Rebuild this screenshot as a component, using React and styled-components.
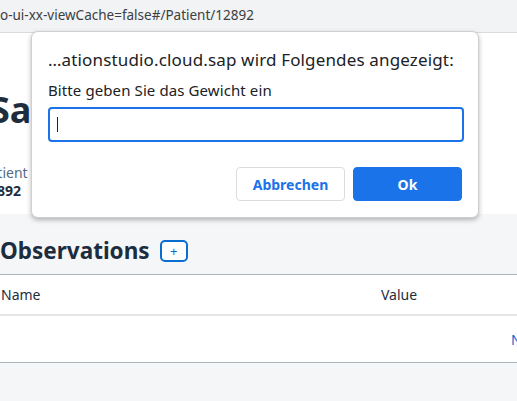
import React from "react";
import styled, { createGlobalStyle } from "styled-components";

const Global = createGlobalStyle`
  html, body {
    margin: 0;
    padding: 0;
    background: #f5f6f7;
    overflow: hidden;
  }
  * { box-sizing: border-box; }
`;

const Screen = styled.div`
  position: relative;
  width: 517px;
  height: 401px;
  overflow: hidden;
  display: flex;
  flex-direction: column;
  font-family: "Noto Sans", "Open Sans", sans-serif;
`;

const UrlBar = styled.div`
  height: 33px;
  flex: none;
  background: #f1f3f4;
  border-bottom: 1px solid #dadce0;
  padding: 4px 0 0 0;
  font-size: 13.5px;
  line-height: 22px;
  color: #3c4043;
  white-space: nowrap;
`;

const Header = styled.header`
  height: 181px;
  flex: none;
  background: #ffffff;
  padding-top: 55px;
  overflow: hidden;
`;

const Title = styled.h1`
  margin: 0 0 0 -10px;
  font-size: 36px;
  line-height: 44px;
  font-weight: 700;
  color: #1d2d3e;
  white-space: nowrap;
`;

const Meta = styled.div`
  margin: 32px 0 0 -19px;
  display: flex;
  flex-direction: column;
`;

const MetaLabel = styled.span`
  font-size: 14px;
  line-height: 18px;
  color: #556b82;
`;

const MetaValue = styled.span`
  font-size: 14px;
  line-height: 18px;
  font-weight: 700;
  color: #1d2d3e;
`;

const Content = styled.main`
  flex: 1;
  background: #f5f6f7;
  padding-top: 19px;
`;

const SectionHead = styled.div`
  display: flex;
  align-items: center;
  gap: 10px;
  height: 36px;
`;

const SectionTitle = styled.h2`
  margin: 0;
  font-size: 22.5px;
  font-weight: 700;
  color: #1d2d3e;
  line-height: 30px;
`;

const AddButton = styled.button`
  width: 28px;
  height: 22px;
  padding: 0;
  border: 2px solid #0a6ed1;
  border-radius: 5px;
  background: #ffffff;
  color: #0a6ed1;
  font-size: 13px;
  line-height: 16px;
  font-family: inherit;
  display: flex;
  align-items: center;
  justify-content: center;
`;

const Table = styled.div`
  margin-top: 5px;
  background: #ffffff;
  border-top: 1px solid #a9b4be;
  border-bottom: 1px solid #a9b4be;
`;

const Row = styled.div`
  display: grid;
  grid-template-columns: 380px 1fr;
  align-items: center;
  height: ${(p) => p.$h}px;
  border-bottom: ${(p) => (p.$sep ? "2px solid #e5e5e5" : "none")};
  font-size: 14px;
  color: ${(p) => p.$color || "#1d2d3e"};
`;

const Cell = styled.div`
  padding-left: ${(p) => p.$pad || 1}px;
  white-space: nowrap;
  overflow: hidden;
`;

const Dialog = styled.div`
  position: absolute;
  left: 31px;
  top: 31px;
  width: 448px;
  height: 187px;
  background: #ffffff;
  border: 1px solid #cfcfcf;
  border-radius: 7px;
  box-shadow: 0 2px 5px rgba(0, 0, 0, 0.28);
  padding: 16px 16px 0 16px;
  font-family: "Noto Sans", "Open Sans", sans-serif;
  color: #202124;
`;

const DialogTitle = styled.div`
  font-size: 17px;
  letter-spacing: 0.15px;
  line-height: 24px;
  white-space: nowrap;
`;

const DialogText = styled.div`
  margin-top: 7px;
  font-size: 15px;
  letter-spacing: 0.1px;
  line-height: 22px;
`;

const Field = styled.div`
  margin-top: 6px;
  height: 35px;
  width: 416px;
  border: 2px solid #1a73e8;
  border-radius: 4px;
  display: flex;
  align-items: center;
  padding-left: 7px;
`;

const Caret = styled.span`
  width: 1px;
  height: 15px;
  background: #202124;
`;

const Actions = styled.div`
  margin-top: 25px;
  display: flex;
  justify-content: flex-end;
  gap: 8px;
`;

const DialogButton = styled.button`
  width: 109px;
  height: 34px;
  border-radius: 4px;
  font-family: inherit;
  font-size: 14px;
  font-weight: 700;
  cursor: pointer;
  border: 1px solid ${(p) => (p.$primary ? "#1a73e8" : "#dadce0")};
  background: ${(p) => (p.$primary ? "#1a73e8" : "#ffffff")};
  color: ${(p) => (p.$primary ? "#ffffff" : "#1a73e8")};
`;

export default function App() {
  return (
    <>
      <Global />
      <Screen>
        <UrlBar>o-ui-xx-viewCache=false#/Patient/12892</UrlBar>
        <Header>
          <Title>Sarah Miller</Title>
          <Meta>
            <MetaLabel>Patient</MetaLabel>
            <MetaValue>12892</MetaValue>
          </Meta>
        </Header>
        <Content>
          <SectionHead>
            <SectionTitle>Observations</SectionTitle>
            <AddButton aria-label="add">+</AddButton>
          </SectionHead>
          <Table>
            <Row $h={41} $sep>
              <Cell>Name</Cell>
              <Cell>Value</Cell>
            </Row>
            <Row $h={46} $color="#0a6ed1">
              <Cell />
              <Cell $pad={131}>No data</Cell>
            </Row>
          </Table>
        </Content>
        <Dialog role="dialog">
          <DialogTitle>…ationstudio.cloud.sap wird Folgendes angezeigt:</DialogTitle>
          <DialogText>Bitte geben Sie das Gewicht ein</DialogText>
          <Field>
            <Caret />
          </Field>
          <Actions>
            <DialogButton>Abbrechen</DialogButton>
            <DialogButton $primary>Ok</DialogButton>
          </Actions>
        </Dialog>
      </Screen>
    </>
  );
}
